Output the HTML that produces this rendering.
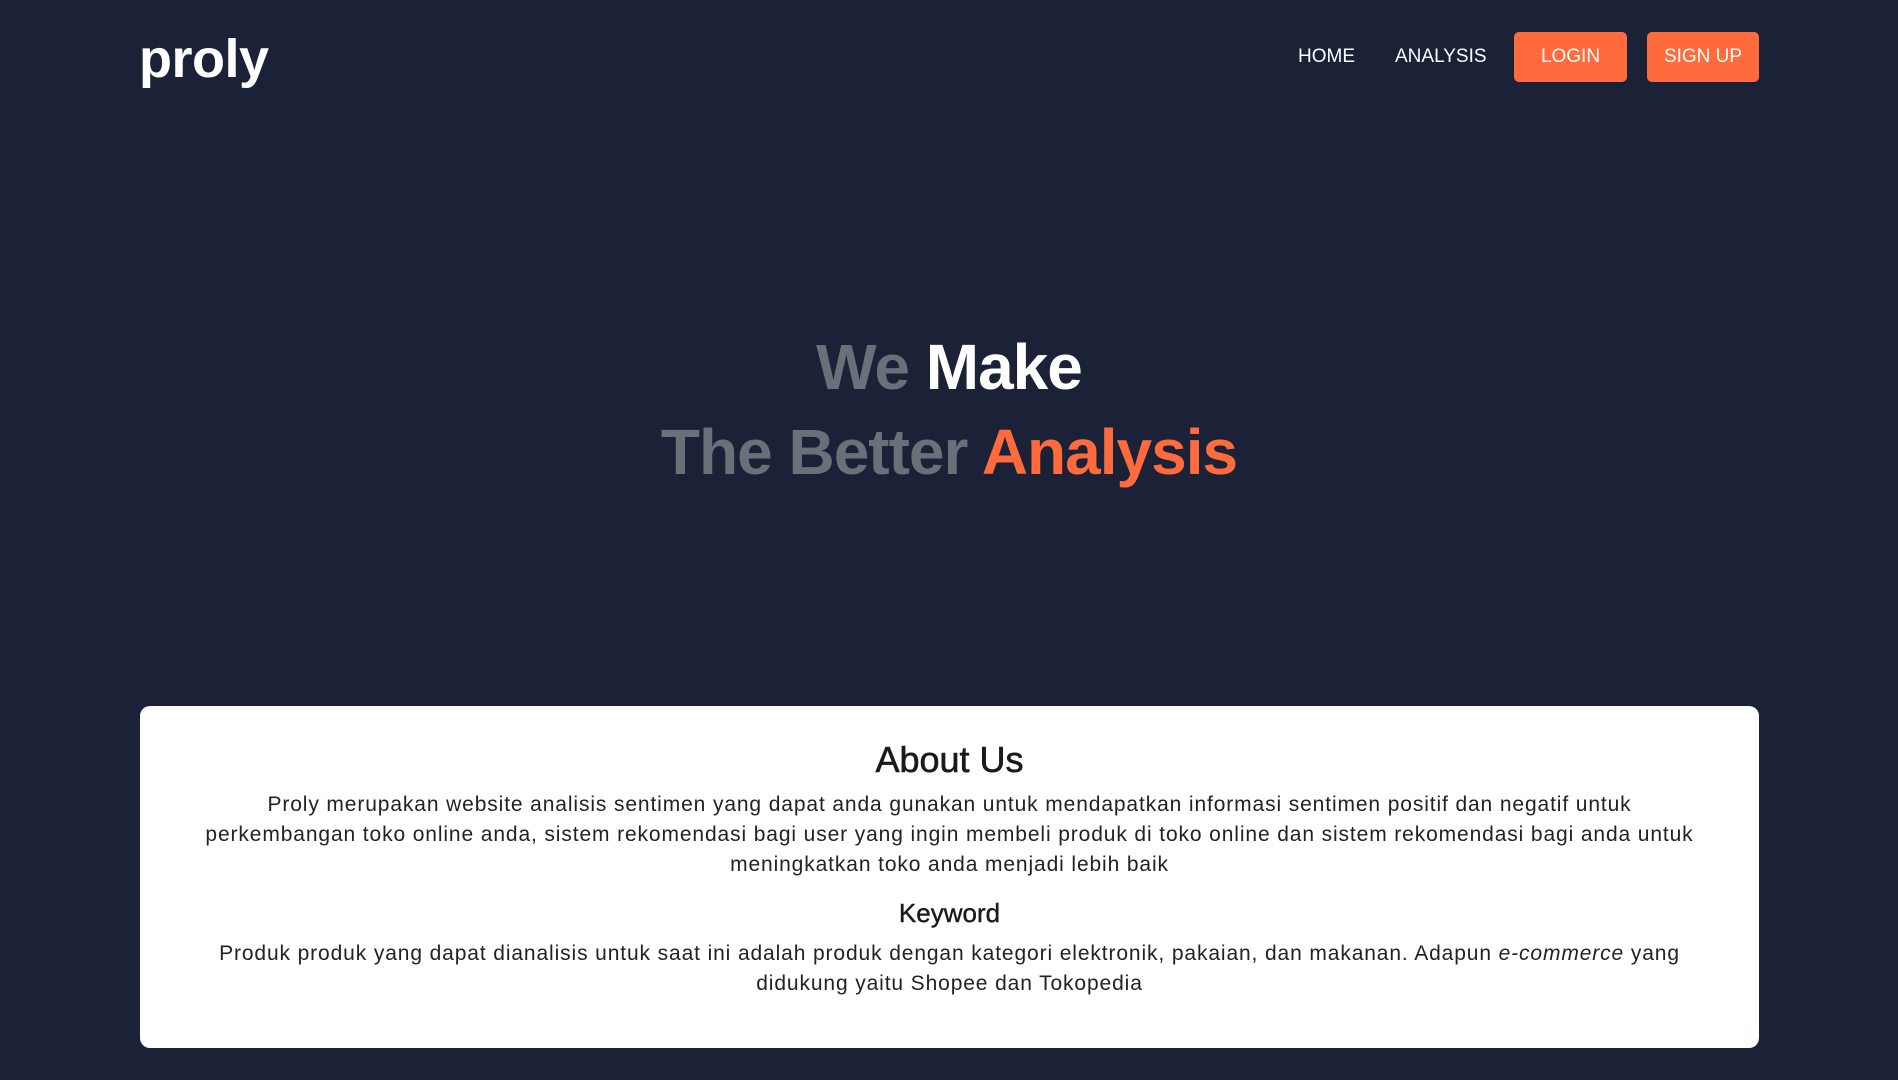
<!DOCTYPE html>
<html><head><meta charset="utf-8"><style>
*{margin:0;padding:0;box-sizing:border-box}
body{width:1898px;height:1080px;background:#1b2238;font-family:"Liberation Sans",sans-serif;overflow:hidden;position:relative}
.logo{position:absolute;left:139px;top:28px;color:#fff;font-weight:bold;font-size:54px;letter-spacing:-0.5px}
.nav{position:absolute;top:32px;height:50px;color:#fff;font-size:19px;line-height:50px}
.btn{background:#ff6b3d;border-radius:5px;text-align:center}
.h{position:absolute;left:0;width:1898px;text-align:center;font-weight:bold;font-size:64px;white-space:nowrap;letter-spacing:-1px}
.g{color:#687079}.w{color:#fff}.o{color:#ff6b3d}
.card{position:absolute;left:140px;top:706px;width:1619px;height:342px;background:#fff;border-radius:10px;text-align:center;color:#222}
.card h2{position:absolute;top:33px;width:100%;font-size:36px;font-weight:normal;color:#1a1a1a;-webkit-text-stroke:0.6px #1a1a1a}
.card p{position:absolute;width:100%;font-size:21px;line-height:30px;white-space:nowrap;letter-spacing:0.88px}
.card h3{position:absolute;top:192px;width:100%;font-size:26px;font-weight:normal;color:#1a1a1a;-webkit-text-stroke:0.4px #1a1a1a}
</style></head><body>
<div class="logo">proly</div>
<div class="nav" style="left:1298px">HOME</div>
<div class="nav" style="left:1395px">ANALYSIS</div>
<div class="nav btn" style="left:1514px;width:113px">LOGIN</div>
<div class="nav btn" style="left:1647px;width:112px">SIGN UP</div>
<div class="h" style="top:330px"><span class="g">We</span> <span class="w">Make</span></div>
<div class="h" style="top:415px"><span class="g">The Better</span> <span class="o">Analysis</span></div>
<div class="card">
<h2>About Us</h2>
<p style="top:84px">Proly merupakan website analisis sentimen yang dapat anda gunakan untuk mendapatkan informasi sentimen positif dan negatif untuk<br>perkembangan toko online anda, sistem rekomendasi bagi user yang ingin membeli produk di toko online dan sistem rekomendasi bagi anda untuk<br>meningkatkan toko anda menjadi lebih baik</p>
<h3>Keyword</h3>
<p style="top:233px">Produk produk yang dapat dianalisis untuk saat ini adalah produk dengan kategori elektronik, pakaian, dan makanan. Adapun <i>e-commerce</i> yang<br>didukung yaitu Shopee dan Tokopedia</p>
</div>
</body></html>
